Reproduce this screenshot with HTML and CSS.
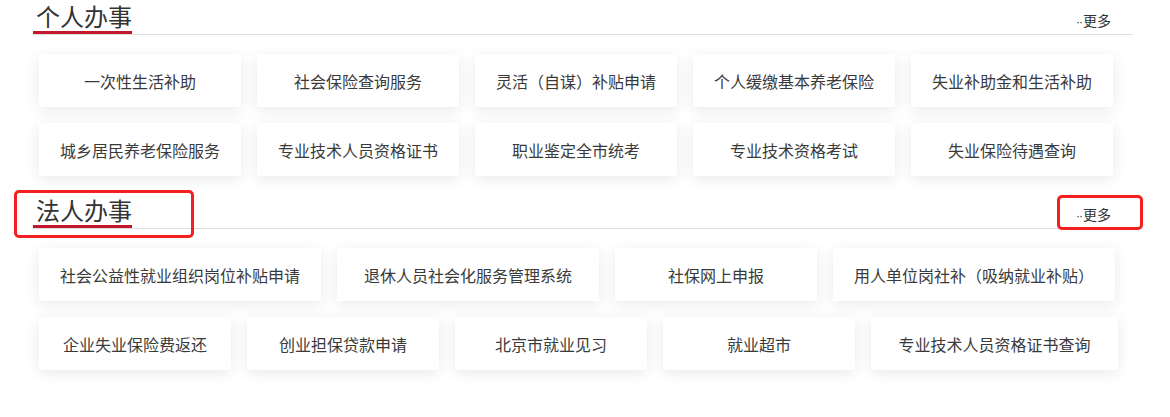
FILE: index.html
```html
<html>
<head>
   <meta charset="utf-8">
   <link rel="stylesheet" href="styles.css">
</head>
<body>
<div id='page'>

<section class='panel'>
<div class='panel-head'>
<h2 class='panel-title'>个人办事</h2>
<a class='more'><span class='dots'>··</span>更多</a>
</div>
<ul class='tiles'>
<li class='tile tile-m'>一次性生活补助</li>
<li class='tile tile-m'>社会保险查询服务</li>
<li class='tile tile-m'>灵活（自谋）补贴申请</li>
<li class='tile tile-m'>个人缓缴基本养老保险</li>
<li class='tile tile-m'>失业补助金和生活补助</li>
<li class='tile tile-m'>城乡居民养老保险服务</li>
<li class='tile tile-m'>专业技术人员资格证书</li>
<li class='tile tile-m'>职业鉴定全市统考</li>
<li class='tile tile-m'>专业技术资格考试</li>
<li class='tile tile-m'>失业保险待遇查询</li>
</ul>
</section>

<section class='panel panel-next'>
<div class='panel-head'>
<h2 class='panel-title'>法人办事</h2>
<a class='more'><span class='dots'>··</span>更多</a>
</div>
<ul class='tiles'>
<li class='tile tile-xxl'>社会公益性就业组织岗位补贴申请</li>
<li class='tile tile-xl'>退休人员社会化服务管理系统</li>
<li class='tile tile-m'>社保网上申报</li>
<li class='tile tile-xxl'>用人单位岗社补（吸纳就业补贴）</li>
<li class='tile tile-s'>企业失业保险费返还</li>
<li class='tile tile-s'>创业担保贷款申请</li>
<li class='tile tile-s'>北京市就业见习</li>
<li class='tile tile-s'>就业超市</li>
<li class='tile tile-l'>专业技术人员资格证书查询</li>
</ul>
</section>

<!-- red marks drawn over the second heading -->
<div class='mark mark-title'></div>
<div class='mark mark-more'></div>

</div>
</body>
</html>
```

FILE: styles.css
```css
  body {
     margin: 0;
     background: #fff;
     font-family: "Noto Sans CJK SC", "Noto Sans", sans-serif;
     color: #333;
  }

  #page {
     position: relative;
     width: 1100px;
     margin-left: 33px;
  }

  .panel-next {
     margin-top: 18px;
  }

  .panel-head {
     display: flex;
     justify-content: space-between;
     border-bottom: 1px solid #ddd;
  }

  .panel-title {
     margin: 0;
     padding-left: 3px;
     font-size: 24px;
     font-weight: normal;
     line-height: 31px;
     color: #333;
     border-bottom: 3px solid #c3172d;
  }

  .more {
     margin-top: 12px;
     padding-right: 22px;
     font-size: 14px;
     line-height: 16px;
     color: #333;
     cursor: pointer;
  }

  .dots {
     font-family: "Liberation Sans", sans-serif;
     font-size: 12px;
     letter-spacing: -1px;
     margin-right: 1px;
  }

  .tiles {
     list-style: none;
     margin: 19px 0 0 6px;
     padding: 0;
     width: 1080px;
     display: flex;
     flex-wrap: wrap;
     gap: 16px;
  }

  .tile {
     height: 53px;
     display: flex;
     align-items: center;
     justify-content: center;
     background: #fff;
     font-size: 16px;
     color: #3a3a3a;
     box-shadow: 0px 3px 14px rgba(0, 0, 0, 0.09);
  }

  .tile-s { width: 192px; }
  .tile-m { width: 202px; }
  .tile-l { width: 247px; }
  .tile-xl { width: 262px; }
  .tile-xxl { width: 282px; }

  .mark {
     position: absolute;
     box-sizing: border-box;
     border: 3px solid #f41f1f;
     border-radius: 5px;
  }

  .mark-title {
     left: -19px;
     top: 190px;
     width: 180px;
     height: 48px;
  }

  .mark-more {
     left: 1024px;
     top: 195px;
     width: 86px;
     height: 35px;
  }
```
